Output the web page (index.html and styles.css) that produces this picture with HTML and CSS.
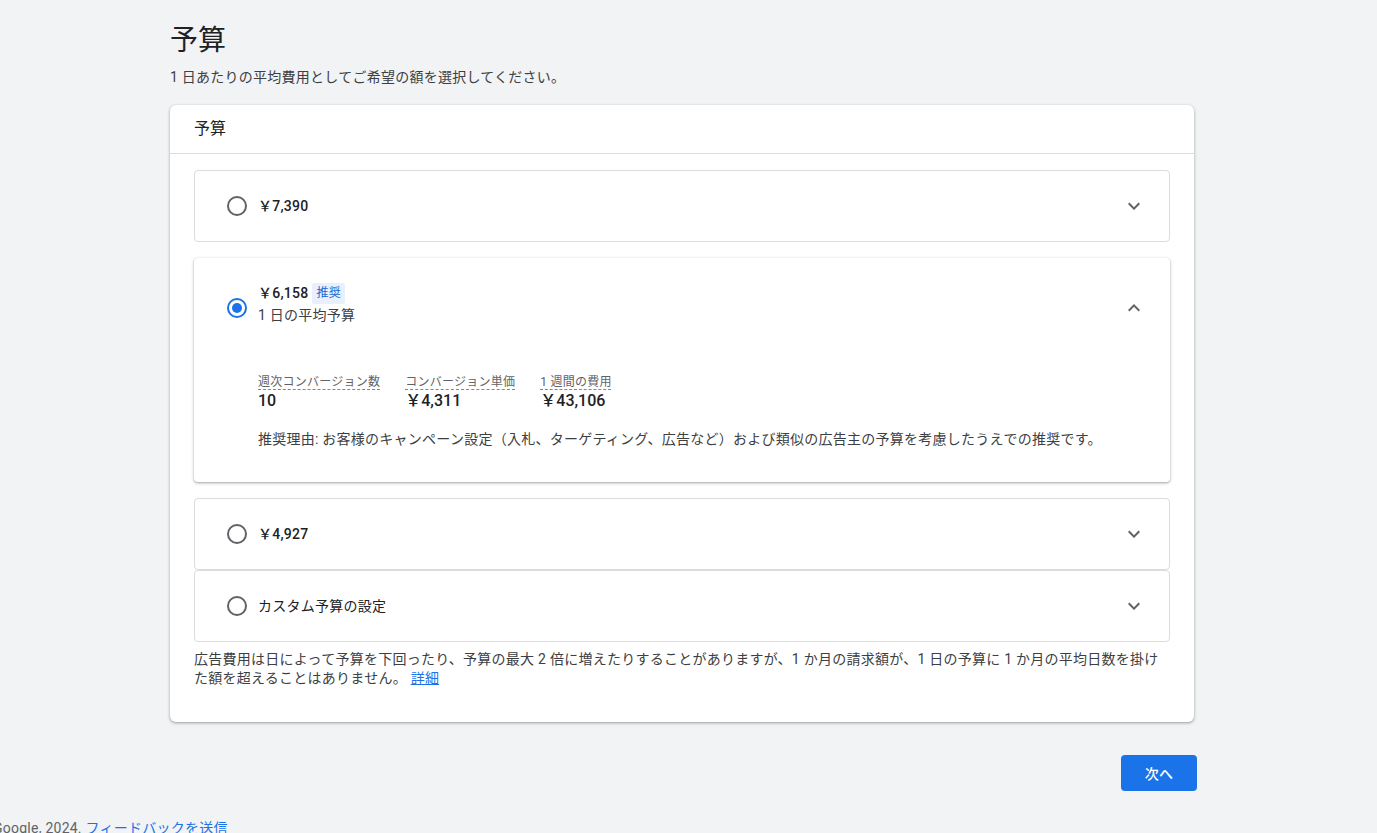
FILE: index.html
```html
<!DOCTYPE html>
<html lang="ja">
<head>
<meta charset="utf-8">
<title>予算</title>
<link rel="stylesheet" href="styles.css">
</head>
<body>
<main class="page">
  <h1 class="title">予算</h1>
  <p class="subtitle">1 日あたりの平均費用としてご希望の額を選択してください。</p>
  <section class="card">
    <div class="card-header">予算</div>
    <div class="card-body">
      <div class="options">
        <div class="option gap-after">
          <div class="option-row">
            <span class="radio"></span>
            <span class="price">￥7,390</span>
            <svg class="chev" viewBox="0 0 24 24" width="24" height="24"><path d="M16.59 8.59L12 13.17 7.41 8.59 6 10l6 6 6-6z"/></svg>
          </div>
        </div>
        <div class="option expanded gap-after">
          <div class="option-row tall">
            <span class="radio checked"></span>
            <div class="label-stack">
              <div class="price-line"><span class="price">￥6,158</span><span class="badge">推奨</span></div>
              <div class="sub-label">1 日の平均予算</div>
            </div>
            <svg class="chev" viewBox="0 0 24 24" width="24" height="24"><path d="M7.41 15.41L12 10.83l4.59 4.58L18 14l-6-6-6 6z"/></svg>
          </div>
          <div class="option-detail">
            <div class="metrics">
              <div class="metric"><span class="metric-label">週次コンバージョン数</span><span class="metric-value">10</span></div>
              <div class="metric"><span class="metric-label">コンバージョン単価</span><span class="metric-value">￥4,311</span></div>
              <div class="metric"><span class="metric-label">1 週間の費用</span><span class="metric-value">￥43,106</span></div>
            </div>
            <p class="reason">推奨理由: お客様のキャンペーン設定（入札、ターゲティング、広告など）および類似の広告主の予算を考慮したうえでの推奨です。</p>
          </div>
        </div>
        <div class="option">
          <div class="option-row">
            <span class="radio"></span>
            <span class="price">￥4,927</span>
            <svg class="chev" viewBox="0 0 24 24" width="24" height="24"><path d="M16.59 8.59L12 13.17 7.41 8.59 6 10l6 6 6-6z"/></svg>
          </div>
        </div>
        <div class="option">
          <div class="option-row">
            <span class="radio"></span>
            <span class="custom">カスタム予算の設定</span>
            <svg class="chev" viewBox="0 0 24 24" width="24" height="24"><path d="M16.59 8.59L12 13.17 7.41 8.59 6 10l6 6 6-6z"/></svg>
          </div>
        </div>
      </div>
      <p class="notice">広告費用は日によって予算を下回ったり、予算の最大 2 倍に増えたりすることがありますが、1 か月の請求額が、1 日の予算に 1 か月の平均日数を掛けた額を超えることはありません。 <a class="link" href="#">詳細</a></p>
    </div>
  </section>
  <div class="actions"><button class="btn-primary" type="button">次へ</button></div>
</main>
<footer class="footer">© Google, 2024. <a class="footer-link" href="#">フィードバックを送信</a></footer>
</body>
</html>
```

FILE: styles.css
```css
html, body {
  margin: 0;
  padding: 0;
  background: #f1f3f4;
}
body {
  font-family: Roboto, "Noto Sans CJK JP", sans-serif;
  color: #3c4043;
  font-size: 14px;
  line-height: 20px;
  letter-spacing: 0.25px;
  overflow: hidden;
  height: 833px;
}
.page {
  padding: 23px 0 0 170px;
  width: 1027px;
}
.title {
  margin: 0;
  font-size: 28px;
  line-height: 36px;
  font-weight: 400;
  letter-spacing: 0;
  color: #202124;
}
.subtitle {
  margin: 8px 0 18px;
  font-size: 14px;
  line-height: 20px;
  color: #3c4043;
}
.card {
  width: 1024px;
  background: #fff;
  border-radius: 6px;
  box-shadow: 0 1px 2px rgba(60,64,67,.3), 0 1px 3px 1px rgba(60,64,67,.15);
}
.card-header {
  height: 49px;
  box-sizing: border-box;
  border-bottom: 1px solid #dadce0;
  padding: 0 24px;
  display: flex;
  align-items: center;
  font-size: 16px;
  letter-spacing: 0;
  color: #202124;
}
.card-body {
  padding: 16px 24px 34px;
}
.options {
  display: flex;
  flex-direction: column;
}
.option {
  border: 1px solid #dadce0;
  border-radius: 4px;
  background: #fff;
}
.option.gap-after {
  margin-bottom: 16px;
}
.option.expanded {
  border-color: transparent;
  box-shadow: 0 1px 2px rgba(60,64,67,.3), 0 1px 3px 1px rgba(60,64,67,.15);
}
.option-row {
  height: 70px;
  display: flex;
  align-items: center;
  padding: 0 23px 0 32px;
}
.option-row.tall {
  height: 98px;
}
.radio {
  width: 20px;
  height: 20px;
  box-sizing: border-box;
  border: 2px solid #5f6368;
  border-radius: 50%;
  margin-right: 11px;
  flex: none;
  display: flex;
  align-items: center;
  justify-content: center;
}
.radio.checked {
  border-color: #1a73e8;
}
.radio.checked::after {
  content: "";
  width: 10px;
  height: 10px;
  border-radius: 50%;
  background: #1a73e8;
}
.price {
  font-size: 14px;
  font-weight: 500;
  color: #202124;
}
.custom {
  font-size: 14px;
  color: #202124;
}
.chev {
  margin-left: auto;
  fill: #5f6368;
  flex: none;
}
.label-stack {
  display: flex;
  flex-direction: column;
  margin-bottom: 8px;
}
.price-line {
  display: flex;
  align-items: center;
  height: 22px;
}
.badge {
  margin-left: 4px;
  background: #e8f0fe;
  color: #1967d2;
  font-size: 12px;
  line-height: 21px;
  padding: 0 4px;
  border-radius: 2px;
}
.sub-label {
  font-size: 14px;
  line-height: 22px;
  color: #3c4043;
}
.option-detail {
  padding: 17px 24px 32px 63px;
}
.metrics {
  display: flex;
  gap: 25px;
}
.metric {
  display: flex;
  flex-direction: column;
}
.metric-label {
  font-size: 12px;
  line-height: 17px;
  color: #5f6368;
  text-decoration: underline dashed #80868b;
  text-underline-offset: 3px;
}
.metric-value {
  font-size: 16px;
  line-height: 20px;
  font-weight: 500;
  letter-spacing: 0;
  color: #202124;
}
.reason {
  margin: 18px 0 0;
  font-size: 14px;
  line-height: 20px;
  color: #3c4043;
}
.notice {
  margin: 8px 0 0;
  font-size: 14px;
  line-height: 19px;
  color: #3c4043;
}
.link {
  color: #1a73e8;
  text-decoration: underline;
}
.actions {
  display: flex;
  justify-content: flex-end;
  margin-top: 33px;
}
.btn-primary {
  width: 76px;
  height: 36px;
  border: none;
  border-radius: 4px;
  background: #1a73e8;
  color: #fff;
  font-family: Roboto, "Noto Sans CJK JP", sans-serif;
  font-size: 14px;
  font-weight: 500;
  letter-spacing: 0.25px;
}
.footer {
  margin-top: 27px;
  text-indent: -22px;
  font-size: 14px;
  line-height: 20px;
  color: #5f6368;
  white-space: nowrap;
}
.footer-link {
  color: #1a73e8;
  text-decoration: none;
}
```
